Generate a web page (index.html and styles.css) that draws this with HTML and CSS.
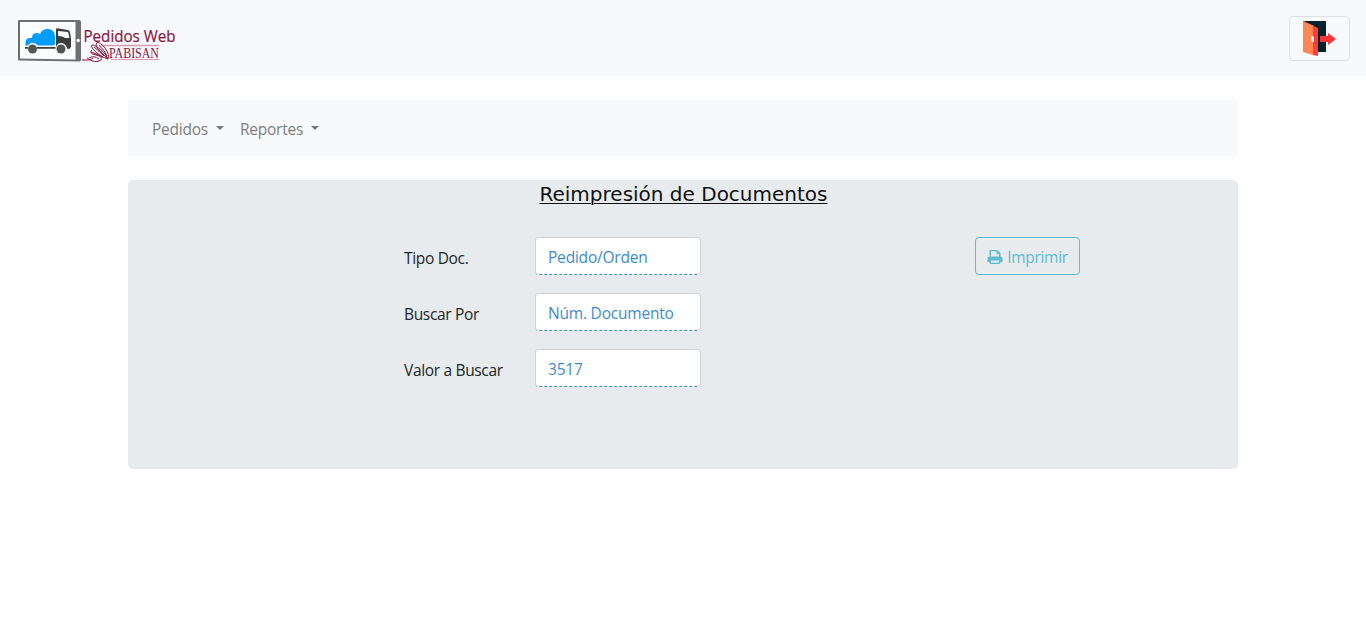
FILE: index.html
```html
<!DOCTYPE html>
<html lang="es">
<head>
<meta charset="utf-8">
<title>Pedidos Web</title>
<link rel="stylesheet" href="styles.css">
</head>
<body>
<header class="topbar">
  <svg class="logo" width="162" height="46" viewBox="0 0 162 46">
    <path fill="#6f6f6f" d="M2 2H62Q64 2 64 4V42Q64 43.500 62 43.500L2 42.500Q1 42.500 1 41V3Q1 2 2 2Z"/>
    <path fill="#fcfdfe" d="M3 4H58.500V41.500L3 40.500Z"/>
    <circle cx="61.200" cy="22.500" r="1.700" fill="#fff"/>
    <path fill="#009dff" d="M8.500 27.500V24Q9 20 13 20H15Q15 15 20 15Q22 15 23 16Q25 11 31 11Q37 11 38 18V26.500L36 27.500H21Q18 24 14 25Q12 25.500 11 27.500Z"/>
    <path fill="#3d3d3d" fill-rule="evenodd" d="M39 10.500H42L51 12Q53 12.500 53 15L54 20V29.500H50Q48 25 44 25Q40 25 39 29.500ZM41 13V18Q46 18 48 20H52.500L51 14Z"/>
    <path d="M8 29.800H11M20 29.800H38.500M50 29.800H53" stroke="#3d3d3d" stroke-width="1.800"/>
    <circle cx="15.500" cy="31" r="4.500" fill="#555"/><circle cx="44" cy="31" r="4.500" fill="#555"/>
    <text class="logo-title" x="66.500" y="23.500" textLength="92" lengthAdjust="spacingAndGlyphs">Pedidos Web</text>
    <path d="M84 27.500H142" stroke="#d79aae" stroke-width="1.500"/>
    <path d="M94 41.500H142" stroke="#d79aae"/>
    <g fill="none" stroke="#8a1743">
      <path d="M65 42H71Q74 42 76 40M75 27Q73 29 80 35Q86 40 91 41Q88 34 83 31Q76 26 75 27M77 29Q83 34 87 38"/>
      <path d="M80 24.500Q77 28 84 34Q88 38 91 41Q93 37 88 30Q83 24 80 24.500M82 27Q88 33 90 38"/>
      <path d="M75 32Q71 35 79 37Q87 39 84 42Q78 46 70 40M74 34Q80 36 86 39M72 40Q77 37 82 41"/>
    </g>
    <text class="logo-brand" x="92" y="40" textLength="50" lengthAdjust="spacingAndGlyphs">PABISAN</text>
  </svg>
  <button class="exit" aria-label="Salir">
    <svg width="36" height="36" viewBox="0 0 36 36">
      <path fill="#03242e" d="M1 0H24V31H12V5Z"/>
      <path fill="#ff3d3d" d="M1 0L16 7V35L11 34V12L1 2Z"/>
      <path fill="#ff8754" d="M1 0.500L11 5V34L1 31Z"/>
      <rect x="9" y="15" width="3" height="6" rx="1.500" fill="#f4ece8"/>
      <path fill="#ff3535" d="M18 15H26V12L34 18L26 24V21H18Z"/>
    </svg>
  </button>
</header>
<main class="container">
  <nav class="menu">
    <a class="menu-item"><span class="pedidos">Pedidos</span><i class="caret"></i></a>
    <a class="menu-item"><span class="reportes">Reportes</span><i class="caret"></i></a>
  </nav>
  <section class="panel">
    <h1 class="title">Reimpresión de Documentos</h1>
    <div class="content">
      <div class="fields">
        <label class="label">Tipo Doc.</label><div class="control">Pedido/Orden</div>
        <label class="label">Buscar Por</label><div class="control">Núm. Documento</div>
        <label class="label">Valor a Buscar</label><div class="control">3517</div>
      </div>
      <button class="print">
        <svg width="16" height="16" viewBox="0 0 16 16">
          <path fill="#5fbccd" fill-rule="evenodd" d="M2.500 7.500V2Q2.500 1 3.500 1H10.500L13.500 4V7.500Q15.500 7.500 15.500 9V12.500Q15.500 13 15 13H13.500V14Q13.500 15 12.500 15H3.500Q2.500 15 2.500 14V13H1Q.5 13 .5 12.500V9Q.5 7.500 2.500 7.500ZM4 2.300V7.500H12V5H9.500V2.300ZM4 11.500V13.700H12V11.500Z"/>
        </svg>
        <span>Imprimir</span>
      </button>
    </div>
  </section>
</main>
</body>
</html>
```

FILE: styles.css
```css
* { box-sizing: border-box; }
body { margin: 0; background: #fff; color: #212529; font: 16px/24px "Open Sans", "Noto Sans", sans-serif; }
.topbar { height: 76px; padding: 0 16px 0 17px; display: flex; align-items: center; justify-content: space-between; background: #f8f9fb; }
.logo { display: block; margin-top: 6px; }
.logo-title { font: 15.500px "Open Sans", sans-serif; fill: #8a1743; stroke: #8a1743; stroke-width: .2px; }
.logo-brand { font: 14px "Liberation Serif", serif; fill: #8a1743; }
.exit { width: 61px; height: 45px; padding: 2px 0 0; display: flex; align-items: center; justify-content: center; border: 1px solid #dddfe2; border-radius: 4px; background: #f8f9fa; }
.container { width: 1110px; margin: 24px auto 0; }
.menu { height: 56px; padding: 1px 16px 0; display: flex; align-items: center; background: #f8f9fb; color: #7d7e80; }
.menu-item { padding: 8px; display: flex; align-items: center; font-size: 15.500px; letter-spacing: -.25px; }
.pedidos { width: 56px; }
.reportes { width: 63px; }
.caret { margin: -2px 0 0 8px; border: 4px solid transparent; border-top-color: #747678; border-bottom: 0; }
.panel { height: 289px; margin-top: 24px; border-radius: 5px; background: #e7ebee; }
.title { margin: 0; padding: 2px 0 0 1px; text-align: center; font: 20px/24px "DejaVu Sans", sans-serif; color: #111; text-decoration: underline; text-decoration-thickness: 1px; text-underline-offset: 2px; }
.content { padding: 31px 158px 0 276px; display: flex; align-items: flex-start; justify-content: space-between; }
.fields { display: grid; grid-template-columns: 131px 166px; row-gap: 18px; }
.label { padding-top: 9px; font-size: 15.500px; letter-spacing: -.33px; white-space: nowrap; }
.control { height: 38px; padding: 7px 12px; border: 1px solid #cdd3d9; border-bottom: 1px dashed #428bca; border-radius: 4px; background: #fff; color: #428bca; font-size: 15.500px; letter-spacing: -.2px; white-space: nowrap; }
.print { width: 105px; height: 38px; padding: 2px 0 0; display: flex; align-items: center; justify-content: center; gap: 4px; border: 1px solid #5fbccd; border-radius: 4px; background: transparent; color: #5fbccd; font: 15.500px/24px "Open Sans", sans-serif; letter-spacing: -.3px; }
```
